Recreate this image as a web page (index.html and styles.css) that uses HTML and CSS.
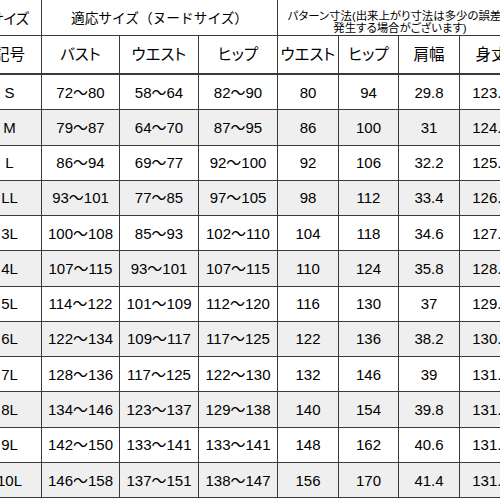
FILE: index.html
```html
<!DOCTYPE html>
<html lang="ja">
<head>
<meta charset="utf-8">
<title>サイズ表</title>
<link rel="stylesheet" href="styles.css">
</head>
<body>
<div class="sheet">
  <div class="row head1">
    <div class="cell">サイズ</div>
    <div class="cell span3 wide">適応サイズ（ヌードサイズ）</div>
    <div class="cell span4 note">パターン寸法(出来上がり寸法は多少の誤差が<br>発生する場合がございます)</div>
  </div>
  <div class="row head2">
    <div class="cell">記号</div>
    <div class="cell">バスト</div>
    <div class="cell">ウエスト</div>
    <div class="cell">ヒップ</div>
    <div class="cell">ウエスト</div>
    <div class="cell">ヒップ</div>
    <div class="cell">肩幅</div>
    <div class="cell">身丈</div>
  </div>
  <div class="row"><div class="cell">S</div><div class="cell">72～80</div><div class="cell">58～64</div><div class="cell">82～90</div><div class="cell">80</div><div class="cell">94</div><div class="cell">29.8</div><div class="cell">123.5</div></div>
  <div class="row alt"><div class="cell">M</div><div class="cell">79～87</div><div class="cell">64～70</div><div class="cell">87～95</div><div class="cell">86</div><div class="cell">100</div><div class="cell">31</div><div class="cell">124.5</div></div>
  <div class="row"><div class="cell">L</div><div class="cell">86～94</div><div class="cell">69～77</div><div class="cell">92～100</div><div class="cell">92</div><div class="cell">106</div><div class="cell">32.2</div><div class="cell">125.5</div></div>
  <div class="row alt"><div class="cell">LL</div><div class="cell">93～101</div><div class="cell">77～85</div><div class="cell">97～105</div><div class="cell">98</div><div class="cell">112</div><div class="cell">33.4</div><div class="cell">126.5</div></div>
  <div class="row"><div class="cell">3L</div><div class="cell">100～108</div><div class="cell">85～93</div><div class="cell">102～110</div><div class="cell">104</div><div class="cell">118</div><div class="cell">34.6</div><div class="cell">127.5</div></div>
  <div class="row alt"><div class="cell">4L</div><div class="cell">107～115</div><div class="cell">93～101</div><div class="cell">107～115</div><div class="cell">110</div><div class="cell">124</div><div class="cell">35.8</div><div class="cell">128.5</div></div>
  <div class="row"><div class="cell">5L</div><div class="cell">114～122</div><div class="cell">101～109</div><div class="cell">112～120</div><div class="cell">116</div><div class="cell">130</div><div class="cell">37</div><div class="cell">129.5</div></div>
  <div class="row alt"><div class="cell">6L</div><div class="cell">122～134</div><div class="cell">109～117</div><div class="cell">117～125</div><div class="cell">122</div><div class="cell">136</div><div class="cell">38.2</div><div class="cell">130.5</div></div>
  <div class="row"><div class="cell">7L</div><div class="cell">128～136</div><div class="cell">117～125</div><div class="cell">122～130</div><div class="cell">132</div><div class="cell">146</div><div class="cell">39</div><div class="cell">131.5</div></div>
  <div class="row alt"><div class="cell">8L</div><div class="cell">134～146</div><div class="cell">123～137</div><div class="cell">129～138</div><div class="cell">140</div><div class="cell">154</div><div class="cell">39.8</div><div class="cell">131.5</div></div>
  <div class="row"><div class="cell">9L</div><div class="cell">142～150</div><div class="cell">133～141</div><div class="cell">133～141</div><div class="cell">148</div><div class="cell">162</div><div class="cell">40.6</div><div class="cell">131.5</div></div>
  <div class="row alt"><div class="cell">10L</div><div class="cell">146～158</div><div class="cell">137～151</div><div class="cell">138～147</div><div class="cell">156</div><div class="cell">170</div><div class="cell">41.4</div><div class="cell">131.5</div></div>
</div>
</body>
</html>
```

FILE: styles.css
```css
html, body {
  margin: 0;
  padding: 0;
  background: #ffffff;
  overflow: hidden;
}

body {
  width: 500px;
  height: 500px;
  font-family: "Liberation Sans", "Noto Sans CJK JP", sans-serif;
  color: #000000;
}

.sheet {
  display: grid;
  grid-template-columns: 63px 77px 78px 78px 60px 59px 60px 62px;
  grid-template-rows: 35px 38px repeat(12, 34.27px);
  gap: 1px;
  background: #3a3a3a;
  width: max-content;
  margin-left: -22px;
  padding-bottom: 1px;
}

.row {
  display: contents;
}

.cell {
  background: #ffffff;
  display: flex;
  align-items: center;
  justify-content: center;
  text-align: center;
  font-size: 15px;
  line-height: 1;
  white-space: nowrap;
}

.row.alt > .cell {
  background: #efefef;
}

.head1 > .cell {
  font-size: 14.5px;
  font-feature-settings: "palt";
  padding-top: 3px;
}

.head2 > .cell {
  font-size: 15.5px;
  font-feature-settings: "palt";
  border-bottom: 1px solid #3a3a3a;
}

.head1 > .wide {
  font-feature-settings: normal;
  font-size: 13.7px;
}

.span3 {
  grid-column: span 3;
}

.span4 {
  grid-column: span 4;
}

.head1 > .note {
  font-size: 11.4px;
  line-height: 12px;
  align-items: flex-end;
  padding-top: 0;
  padding-bottom: 1px;
}
```
